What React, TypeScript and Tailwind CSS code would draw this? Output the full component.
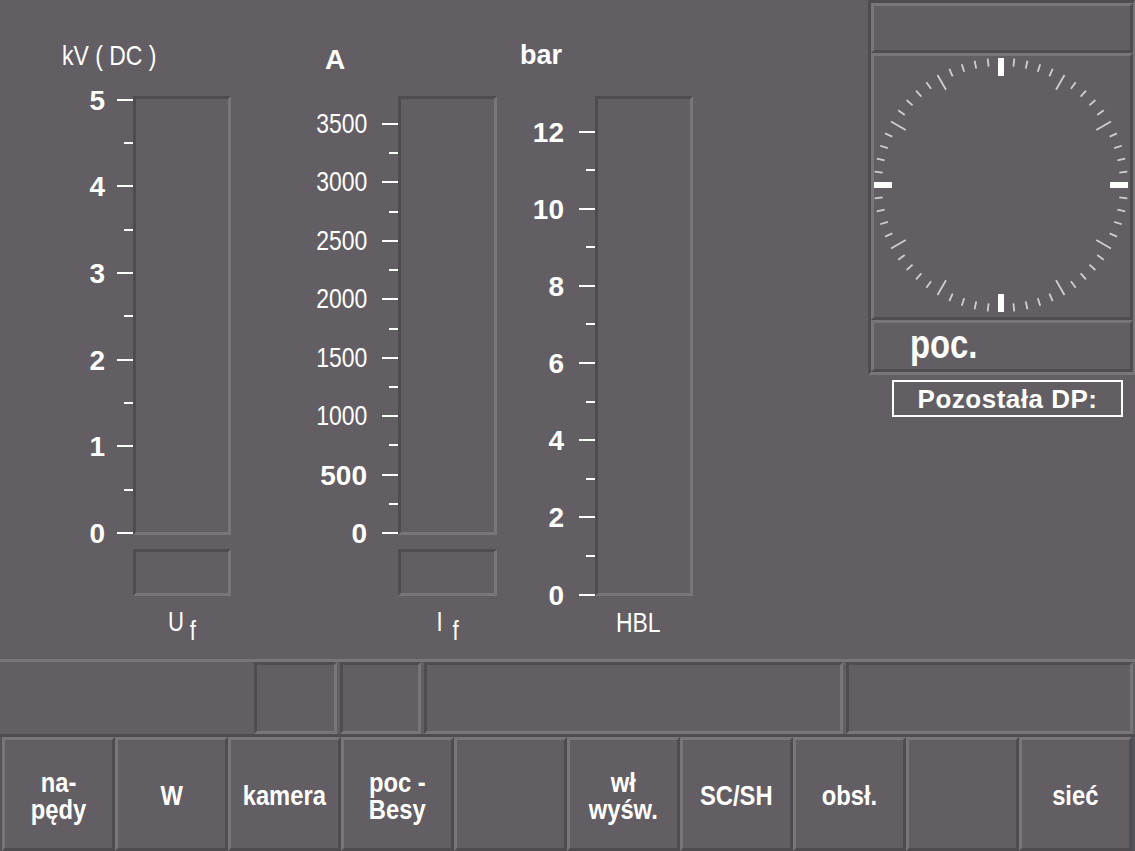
import React from 'react';

type Tick = { y: number; label?: string; bold?: boolean; minor?: boolean };

// majors from top value down to 0, minors half way between
function buildTicks(labels: string[], first: number, step: number, regular: string[] = []): Tick[] {
  const out: Tick[] = [];
  labels.forEach((label, i) => {
    out.push({ y: first + i * step, label, bold: !regular.includes(label) });
    if (i < labels.length - 1) out.push({ y: first + i * step + step / 2, minor: true });
  });
  return out;
}

const kvTicks = buildTicks(['5', '4', '3', '2', '1', '0'], 3.5, 86.7);
const ampTicks = buildTicks(
  ['3500', '3000', '2500', '2000', '1500', '1000', '500', '0'],
  28,
  58.43,
  ['3500', '3000', '2500', '2000', '1500', '1000']
);
const barTicks = buildTicks(['12', '10', '8', '6', '4', '2', '0'], 35.5, 77.17);

// the panel font is a narrow face; squeeze Liberation Sans to match
function Narrow({ children, origin = 'origin-center' }: { children: React.ReactNode; origin?: string }) {
  return <span className={`inline-block scale-x-[0.82] ${origin}`}>{children}</span>;
}

function Scale({ ticks, className, labelClass }: { ticks: Tick[]; className: string; labelClass: string }) {
  return (
    <div className={`relative shrink-0 ${className}`}>
      {ticks.map((t, i) => (
        <React.Fragment key={i}>
          <div
            className={`absolute right-0 h-[2px] bg-white ${t.minor ? 'w-[9px]' : 'w-[16px]'}`}
            style={{ top: t.y - 1 }}
          />
          {t.label && (
            <div
              className={`absolute -translate-y-1/2 leading-none whitespace-nowrap ${labelClass} ${
                t.bold ? 'font-bold text-[28px] mt-[1px]' : 'text-[28px]'
              }`}
              style={{ top: t.y }}
            >
              {t.bold ? t.label : <Narrow origin="origin-right">{t.label}</Narrow>}
            </div>
          )}
        </React.Fragment>
      ))}
    </div>
  );
}

const inset = 'border-[3px] border-t-[#4f4b51] border-l-[#4f4b51] border-b-[#79757b] border-r-[#79757b]';
const raised = 'border-[3px] border-t-[#79757b] border-l-[#79757b] border-b-[#4f4b51] border-r-[#4f4b51]';

function Clock() {
  const cx = 127;
  const cy = 129;
  const marks = Array.from({ length: 60 }, (_, i) => i);
  return (
    <svg width="256" height="261" viewBox="0 0 256 261">
      {marks.map((i) => {
        const a = (i * 6 * Math.PI) / 180;
        const quarter = i % 15 === 0;
        const hour = i % 5 === 0;
        const r1 = 127;
        const r2 = quarter ? 109 : hour ? 110 : 119;
        return (
          <line
            key={i}
            x1={cx + r1 * Math.sin(a)}
            y1={cy - r1 * Math.cos(a)}
            x2={cx + r2 * Math.sin(a)}
            y2={cy - r2 * Math.cos(a)}
            stroke={quarter ? '#ffffff' : '#d0cdd2'}
            strokeWidth={quarter ? 6 : 1.8}
          />
        );
      })}
    </svg>
  );
}

const buttons = ['na-\npędy', 'W', 'kamera', 'poc -\nBesy', '', 'wł\nwyśw.', 'SC/SH', 'obsł.', '', 'sieć'];

export default function App() {
  return (
    <div className="w-[1135px] h-[851px] overflow-hidden bg-[#625e64] text-white font-['Liberation_Sans',Arial,sans-serif]">
      <div className="flex h-[659px] items-start">
        {/* kV gauge */}
        <div className="ml-[60px] flex flex-col w-[171px]">
          <div className="h-[96px] pt-[42px] pl-[2px] text-[28px] leading-none whitespace-pre">
            <Narrow origin="origin-left">kV ( DC )</Narrow>
          </div>
          <div className="flex">
            <Scale ticks={kvTicks} className="w-[73px] h-[439px]" labelClass="right-[28px]" />
            <div className={`w-[98px] h-[439px] ${inset}`} />
          </div>
          <div className={`ml-[73px] mt-[14px] w-[98px] h-[47px] ${inset}`} />
          <div className="ml-[73px] mt-[13px] w-[98px] text-center text-[27px] leading-none">
            <Narrow>
              U<span className="ml-[7px] align-[-9px]">f</span>
            </Narrow>
          </div>
        </div>

        {/* current gauge */}
        <div className="ml-[79px] flex flex-col w-[187px]">
          <div className="h-[96px] pt-[46px] pl-[15px] text-[28px] font-bold leading-none">A</div>
          <div className="flex">
            <Scale ticks={ampTicks} className="w-[88px] h-[439px]" labelClass="right-[31px]" />
            <div className={`w-[99px] h-[439px] ${inset}`} />
          </div>
          <div className={`ml-[88px] mt-[14px] w-[99px] h-[47px] ${inset}`} />
          <div className="ml-[88px] mt-[13px] w-[99px] text-center text-[27px] leading-none">
            <Narrow>
              I<span className="ml-[12px] align-[-9px]">f</span>
            </Narrow>
          </div>
        </div>

        {/* pressure gauge */}
        <div className="ml-[23px] flex flex-col w-[173px]">
          <div className="h-[96px] pt-[42px] text-[27px] font-bold leading-none">bar</div>
          <div className="flex">
            <Scale ticks={barTicks} className="w-[75px] h-[500px]" labelClass="right-[31px]" />
            <div className={`w-[98px] h-[500px] ${inset}`} />
          </div>
          <div className="ml-[69px] mt-[13px] w-[98px] text-center text-[28px] leading-none">
            <Narrow>HBL</Narrow>
          </div>
        </div>

        {/* right panel */}
        <div className="ml-auto w-[267px] flex flex-col">
          <div className="border-t-[3px] border-l-[3px] border-b-[3px] border-r-[2px] border-t-[#4f4b51] border-l-[#4f4b51] border-b-[#79757b] border-r-[#79757b]">
            <div className={`h-[50px] ${raised}`} />
            <div className={`h-[267px] ${raised}`}>
              <Clock />
            </div>
            <div className={`h-[52px] pl-[36px] pt-[1px] ${raised}`}>
              <div className="text-[40px] font-bold leading-none">
                <Narrow origin="origin-left">poc.</Narrow>
              </div>
            </div>
          </div>
          <div className="mt-[5px] ml-[24px] w-[231px] h-[37px] border-2 border-white flex items-center justify-center">
            <span className="text-[26px] font-bold leading-none tracking-[0.5px]">Pozostała DP:</span>
          </div>
        </div>
      </div>

      {/* status bar */}
      <div className="flex h-[78px] border-t-[3px] border-b-[3px] border-t-[#79757b] border-b-[#4f4b51]">
        <div className="w-[254px]" />
        <div className={`w-[83px] ${inset}`} />
        <div className={`ml-[3px] w-[81px] ${inset}`} />
        <div className={`ml-[3px] w-[419px] ${inset}`} />
        <div className={`ml-[3px] w-[287px] ${inset}`} />
      </div>

      {/* soft keys */}
      <div className="flex h-[114px] pl-[2px] bg-[#57535a]">
        {buttons.map((b, i) => (
          <div
            key={i}
            className={`w-[113px] h-full pt-[5px] flex items-center justify-center bg-[#625e64] ${raised}`}
          >
            <span className="inline-block scale-x-[0.88] whitespace-pre-line text-center text-[27px] font-bold leading-[27px]">
              {b}
            </span>
          </div>
        ))}
      </div>
    </div>
  );
}
